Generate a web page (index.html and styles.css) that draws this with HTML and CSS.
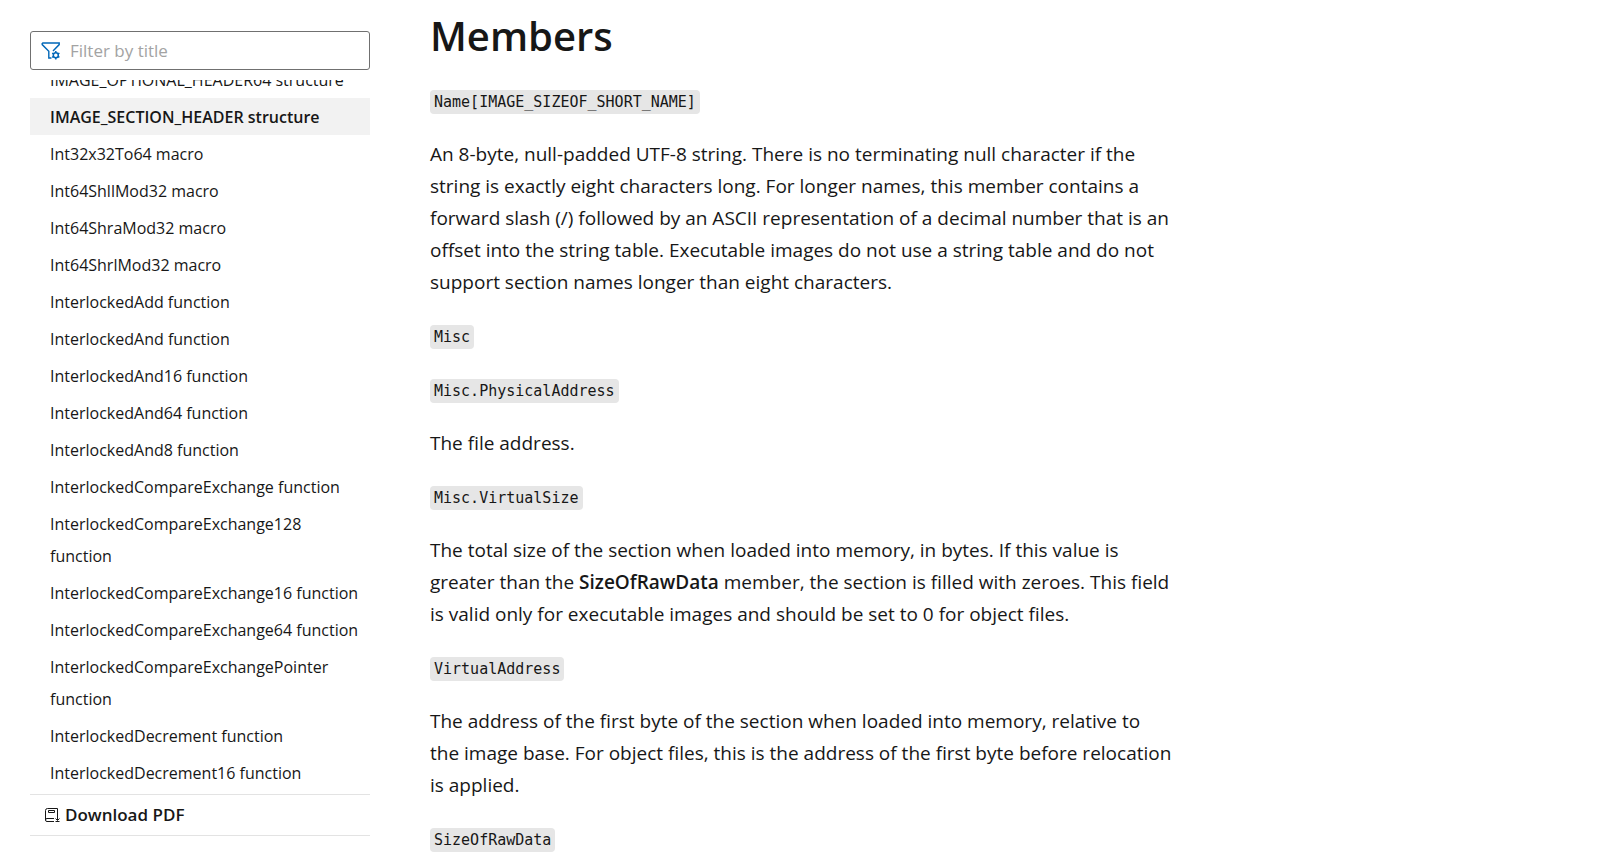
FILE: index.html
```html
<!DOCTYPE html>
<html lang="en">
<head>
<meta charset="utf-8">
<title>IMAGE_SECTION_HEADER structure</title>
<link rel="stylesheet" href="styles.css">
</head>
<body>
<div class="page">
  <aside class="sidebar">
    <div class="filter">
      <svg class="filter-icon" viewBox="0 0 20 20" aria-hidden="true">
        <path d="M1.2 2H18.2V3.6L12 10M1.2 2V3.6L7.8 10.3V17H10.5" fill="none" stroke="currentColor" stroke-width="1.4"/>
        <circle cx="14.8" cy="14.2" r="2.5" fill="none" stroke="currentColor" stroke-width="1.5"/>
        <path d="M14.8 10V11.6M14.8 16.8V18.4M11.2 12.1L12.5 12.9M17.1 15.5L18.4 16.3M11.2 16.3L12.5 15.5M17.1 12.9L18.4 12.1" stroke="currentColor" stroke-width="1.5"/>
      </svg>
      <input class="filter-input" type="text" placeholder="Filter by title" aria-label="Filter by title">
    </div>
    <nav class="toc" aria-label="Table of contents">
      <a class="toc-item" href="#">IMAGE_OPTIONAL_HEADER64 structure</a>
      <a class="toc-item toc-current" href="#" aria-current="page">IMAGE_SECTION_HEADER structure</a>
      <a class="toc-item" href="#">Int32x32To64 macro</a>
      <a class="toc-item" href="#">Int64ShllMod32 macro</a>
      <a class="toc-item" href="#">Int64ShraMod32 macro</a>
      <a class="toc-item" href="#">Int64ShrlMod32 macro</a>
      <a class="toc-item" href="#">InterlockedAdd function</a>
      <a class="toc-item" href="#">InterlockedAnd function</a>
      <a class="toc-item" href="#">InterlockedAnd16 function</a>
      <a class="toc-item" href="#">InterlockedAnd64 function</a>
      <a class="toc-item" href="#">InterlockedAnd8 function</a>
      <a class="toc-item" href="#">InterlockedCompareExchange function</a>
      <a class="toc-item" href="#">InterlockedCompareExchange128<br>function</a>
      <a class="toc-item" href="#">InterlockedCompareExchange16 function</a>
      <a class="toc-item" href="#">InterlockedCompareExchange64 function</a>
      <a class="toc-item" href="#">InterlockedCompareExchangePointer<br>function</a>
      <a class="toc-item" href="#">InterlockedDecrement function</a>
      <a class="toc-item" href="#">InterlockedDecrement16 function</a>
    </nav>
    <button class="download" type="button">
      <svg class="download-icon" viewBox="0 0 16 16" aria-hidden="true">
        <path d="M13.5 9V1.500H3.500A2 2 0 0 0 1.500 3.500V13A1.500 1.500 0 0 0 3 14.500H10M1.500 13A1.500 1.500 0 0 1 3 11.500H10" fill="none" stroke="currentColor"/>
        <path d="M4.500 3.500H10.500V5.500H4.500ZM13.500 9V13M11.500 11.500L13.500 13.500L15.500 11.500M11.500 14.500H15.500" fill="none" stroke="currentColor"/>
      </svg>
      Download PDF
    </button>
  </aside>
  <main class="content">
    <h2 class="title">Members</h2>
    <p class="member"><code>Name[IMAGE_SIZEOF_SHORT_NAME]</code></p>
    <p>An 8-byte, null-padded UTF-8 string. There is no terminating null character if the string is exactly eight characters long. For longer names, this member contains a forward slash (/) followed by an ASCII representation of a decimal number that is an offset into the string table. Executable images do not use a string table and do not support section names longer than eight characters.</p>
    <p class="member"><code>Misc</code></p>
    <p class="member"><code>Misc.PhysicalAddress</code></p>
    <p>The file address.</p>
    <p class="member"><code>Misc.VirtualSize</code></p>
    <p>The total size of the section when loaded into memory, in bytes. If this value is greater than the <strong>SizeOfRawData</strong> member, the section is filled with zeroes. This field is valid only for executable images and should be set to 0 for object files.</p>
    <p class="member"><code>VirtualAddress</code></p>
    <p>The address of the first byte of the section when loaded into memory, relative to the image base. For object files, this is the address of the first byte before relocation is applied.</p>
    <p class="member"><code>SizeOfRawData</code></p>
  </main>
</div>
</body>
</html>
```
FILE: styles.css
```css
* { box-sizing: border-box; }
body {
  margin: 0;
  background: #fff;
  color: #171717;
  font-family: "Open Sans", "Noto Sans", sans-serif;
  font-size: 19px;
  line-height: 32px;
}
.page {
  display: grid;
  grid-template-columns: 340px minmax(0, 744px);
  column-gap: 60px;
  height: 100vh;
  padding: 0 30px;
  overflow: hidden;
}
.sidebar {
  display: flex;
  flex-direction: column;
  height: 100vh;
  padding: 31px 0 29px;
  font-size: 16px;
}
.filter {
  display: flex;
  align-items: center;
  gap: 9px;
  height: 39px;
  flex: none;
  margin-bottom: 10px;
  padding: 0 10px;
  border: 1px solid #707070;
  border-radius: 3px;
}
.filter-icon { flex: none; width: 20px; height: 20px; color: #0067b8; }
.filter-input {
  flex: 1;
  min-width: 0;
  padding: 0;
  border: 0;
  outline: 0;
  background: none;
  color: inherit;
  font: inherit;
  font-size: 17px;
}
.filter-input::placeholder { color: #a3a3a3; opacity: 1; }
.toc {
  display: flex;
  flex: 1;
  flex-direction: column;
  justify-content: flex-end;
  min-height: 0;
  padding-bottom: 3px;
  overflow: hidden;
}
.toc-item {
  flex: none;
  padding: 3px 0 2px 20px;
  color: inherit;
  text-decoration: none;
}
.toc-current { background: #f2f2f2; font-weight: 600; }
.download {
  display: flex;
  align-items: center;
  gap: 5px;
  flex: none;
  height: 42px;
  padding: 0 14px;
  border: 0;
  border-top: 1px solid #e3e3e3;
  border-bottom: 1px solid #e3e3e3;
  background: none;
  color: inherit;
  font: inherit;
  font-size: 17px;
  font-weight: 600;
}
.download-icon { flex: none; width: 16px; height: 16px; }
.content { padding-top: 8px; }
.title {
  margin: 0 0 20px;
  font-size: 40px;
  font-weight: 600;
  line-height: 56px;
}
p { margin: 0 0 21px; }
.member { margin-bottom: 22px; }
strong { font-weight: 600; }
code {
  padding: 3px 4px;
  border-radius: 4px;
  background: #e6e6e6;
  font-family: "DejaVu Sans Mono", monospace;
  font-size: 15px;
  line-height: 1;
}
```
